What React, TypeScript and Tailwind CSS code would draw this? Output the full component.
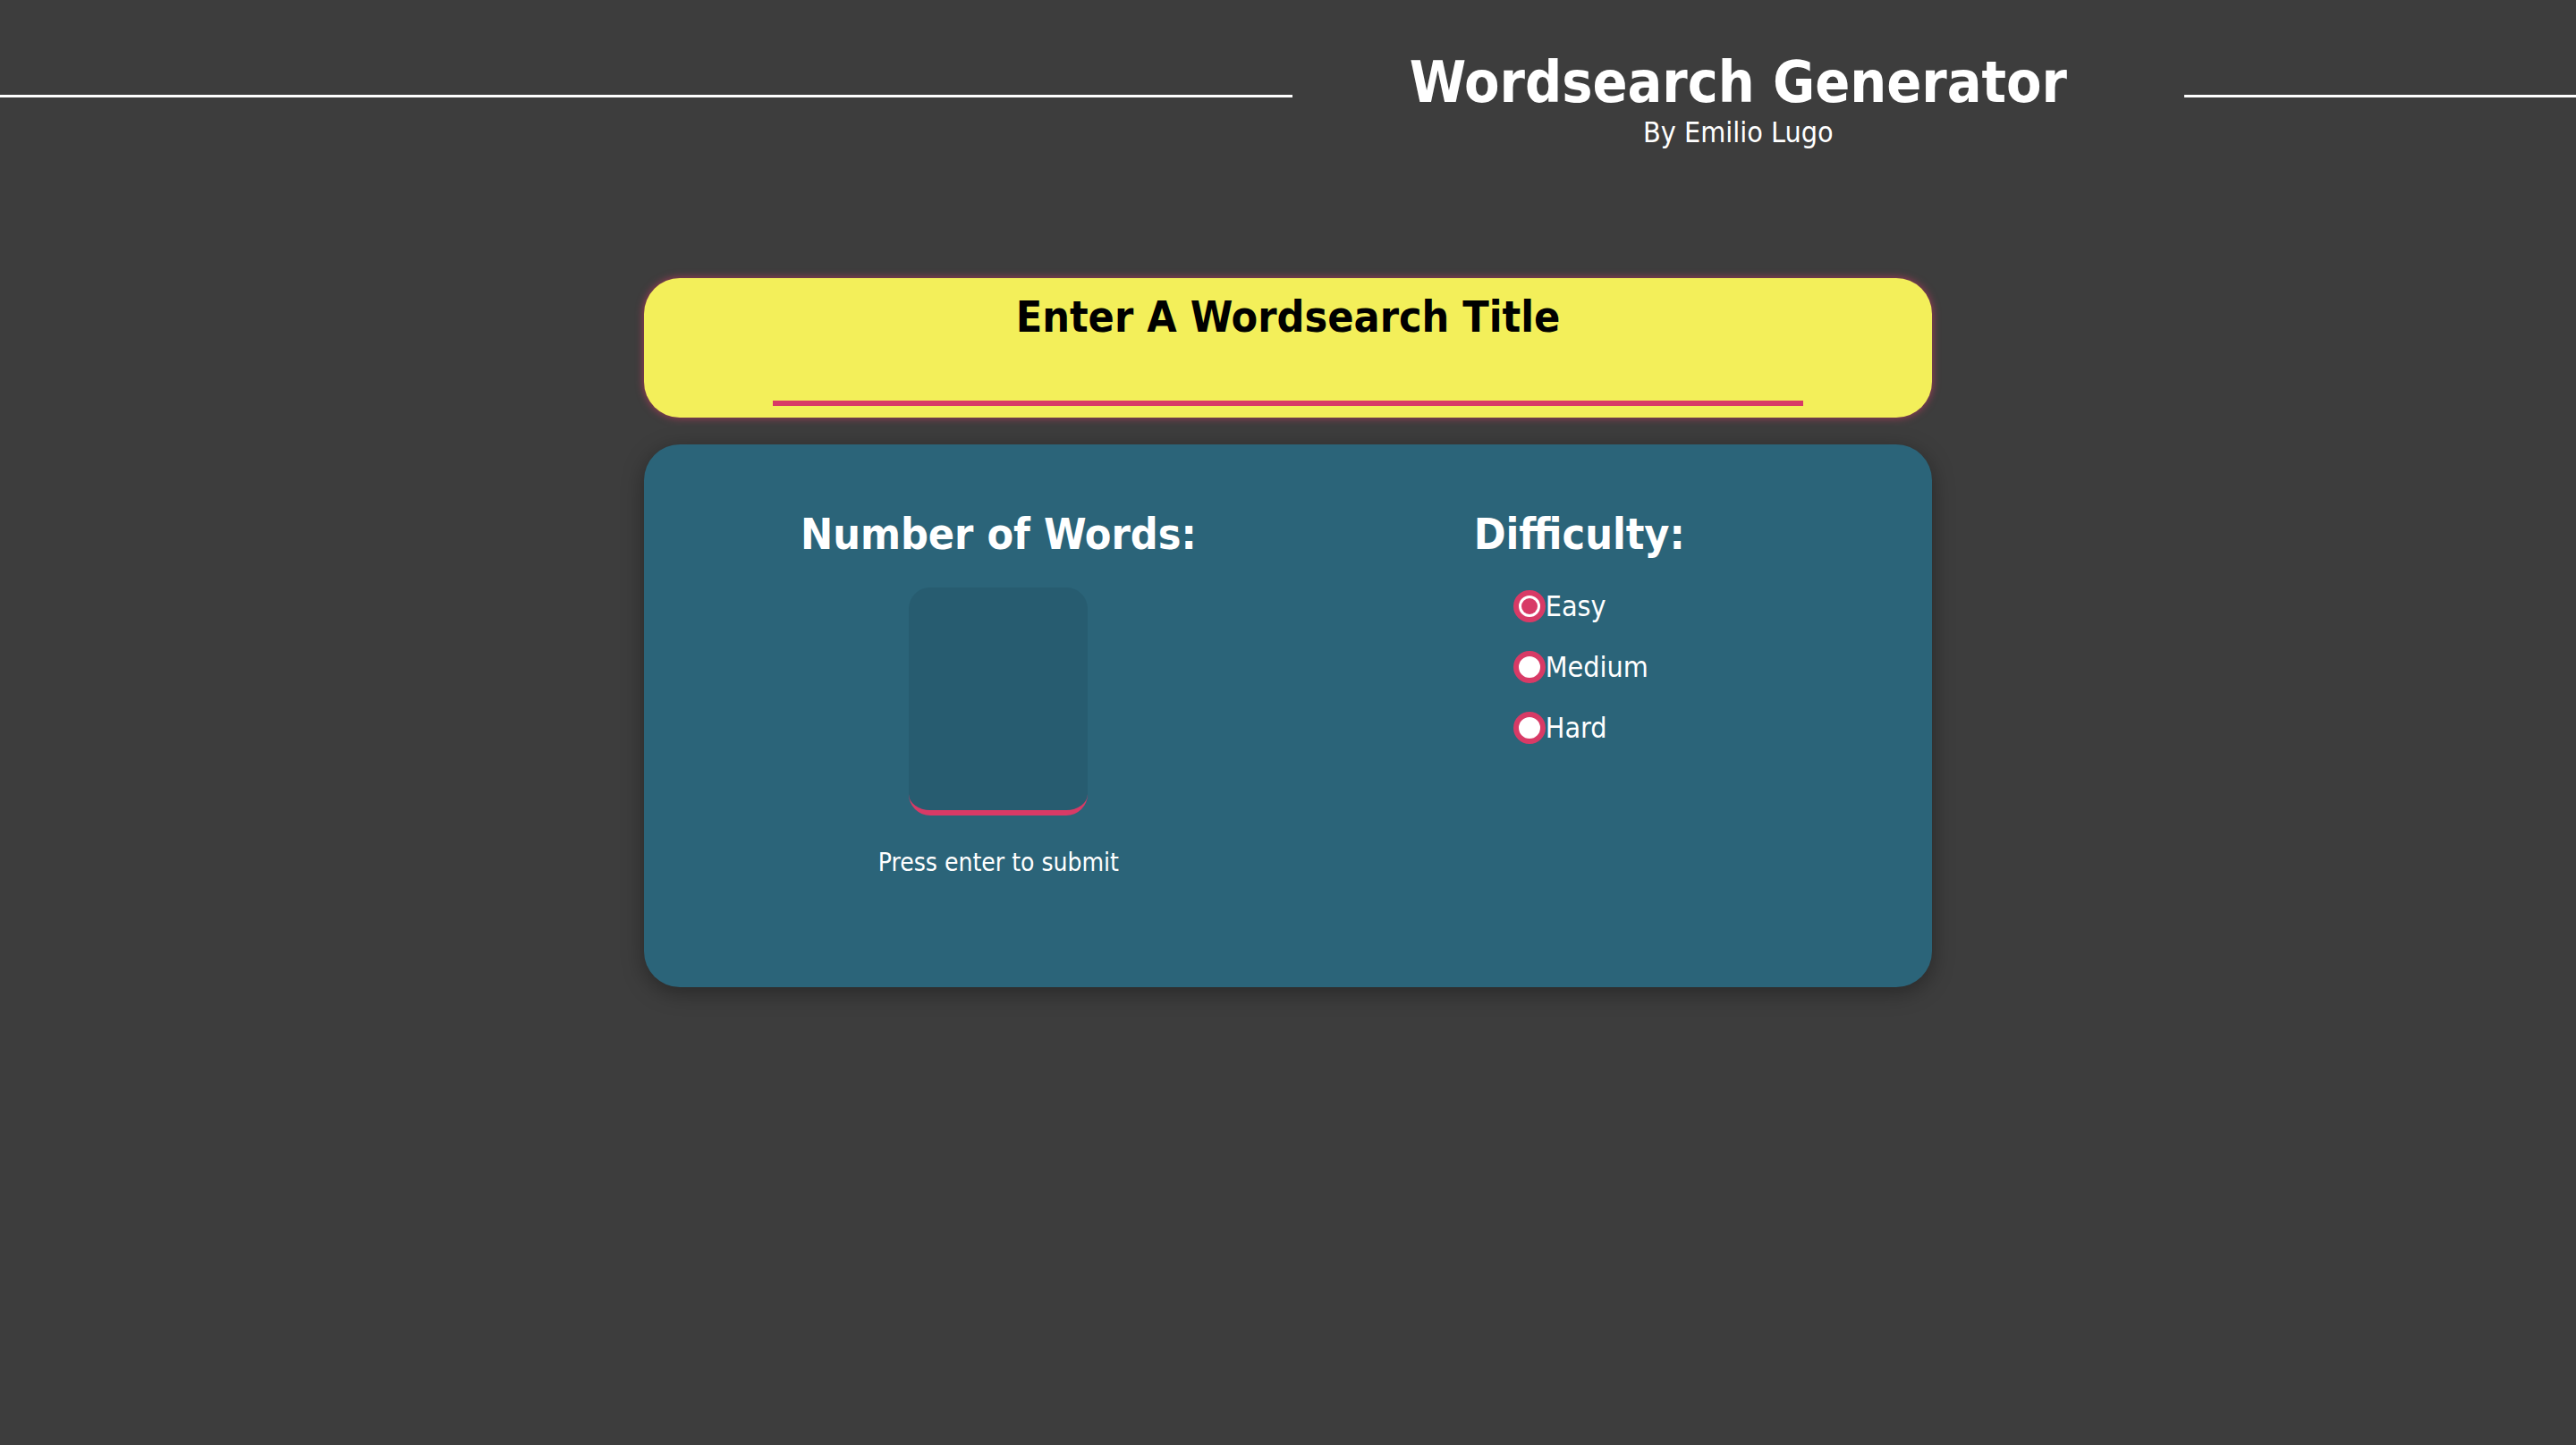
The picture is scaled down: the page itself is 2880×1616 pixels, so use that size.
import { useState } from "react";

const FONT = { fontFamily: '"DejaVu Sans Condensed", "DejaVu Sans", sans-serif' };

const LEVELS = ["Easy", "Medium", "Hard"];

function Radio({ checked, label, onSelect }: { checked: boolean; label: string; onSelect: () => void }) {
  return (
    <label className="flex h-[68px] cursor-pointer items-center" onClick={onSelect}>
      <span className="flex h-[36px] w-[36px] shrink-0 items-center justify-center rounded-full border-[6px] border-[#d83a66] bg-white">
        {checked && <span className="h-[18px] w-[18px] rounded-full bg-[#d83a66]" />}
      </span>
      <span className="text-[32px] leading-[37px] text-white">{label}</span>
    </label>
  );
}

export default function App() {
  const [level, setLevel] = useState("Easy");
  const [title, setTitle] = useState("");
  const [count, setCount] = useState("");

  return (
    <div className="min-h-screen bg-[#3d3d3d]" style={FONT}>
      <header className="flex items-start pt-[55px]">
        <div className="mt-[51px] h-[3px] flex-1 bg-white" />
        <div className="px-[131px] text-center text-white">
          <h1 className="text-[64px] font-bold leading-[75px]">Wordsearch Generator</h1>
          <p className="text-[32px] leading-[37px]">By Emilio Lugo</p>
        </div>
        <div className="mt-[51px] h-[3px] w-[438px] bg-white" />
      </header>

      <main className="mx-auto mt-[144px] flex w-[1440px] flex-col gap-[30px]">
        <section className="flex h-[156px] flex-col items-center rounded-[40px] bg-[#f3ef5a] pt-[15px] shadow-[0_0_10px_rgba(216,58,102,0.7)]">
          <h2 className="text-[48px] font-bold leading-[56px] text-black">Enter A Wordsearch Title</h2>
          <input
            className="mt-[22px] h-[50px] w-[80%] border-b-[6px] border-[#d83a66] bg-transparent text-center text-[40px] text-black outline-none"
            onChange={(e) => setTitle(e.target.value)}
            style={FONT}
            value={title}
          />
        </section>

        <section className="flex h-[607px] items-start gap-[310px] rounded-[40px] bg-[#2b6479] pl-[175px] pt-[72px] shadow-[0_6px_24px_rgba(0,0,0,0.35)]">
          <div className="flex flex-col items-center">
            <h2 className="text-[48px] font-bold leading-[56px] text-white">Number of Words:</h2>
            <input
              className="mt-[32px] h-[255px] w-[200px] rounded-[24px] border-b-[6px] border-[#d83a66] bg-[#275c70] text-center text-[48px] text-white outline-none"
              onChange={(e) => setCount(e.target.value)}
              style={FONT}
              type="text"
              value={count}
            />
            <p className="mt-[36px] text-[28px] leading-[33px] text-white">Press enter to submit</p>
          </div>
          <div className="flex flex-col">
            <h2 className="text-[48px] font-bold leading-[56px] text-white">Difficulty:</h2>
            <div className="mt-[19px] flex flex-col pl-[44px]">
              {LEVELS.map((l) => (
                <Radio checked={level === l} key={l} label={l} onSelect={() => setLevel(l)} />
              ))}
            </div>
          </div>
        </section>
      </main>
    </div>
  );
}
